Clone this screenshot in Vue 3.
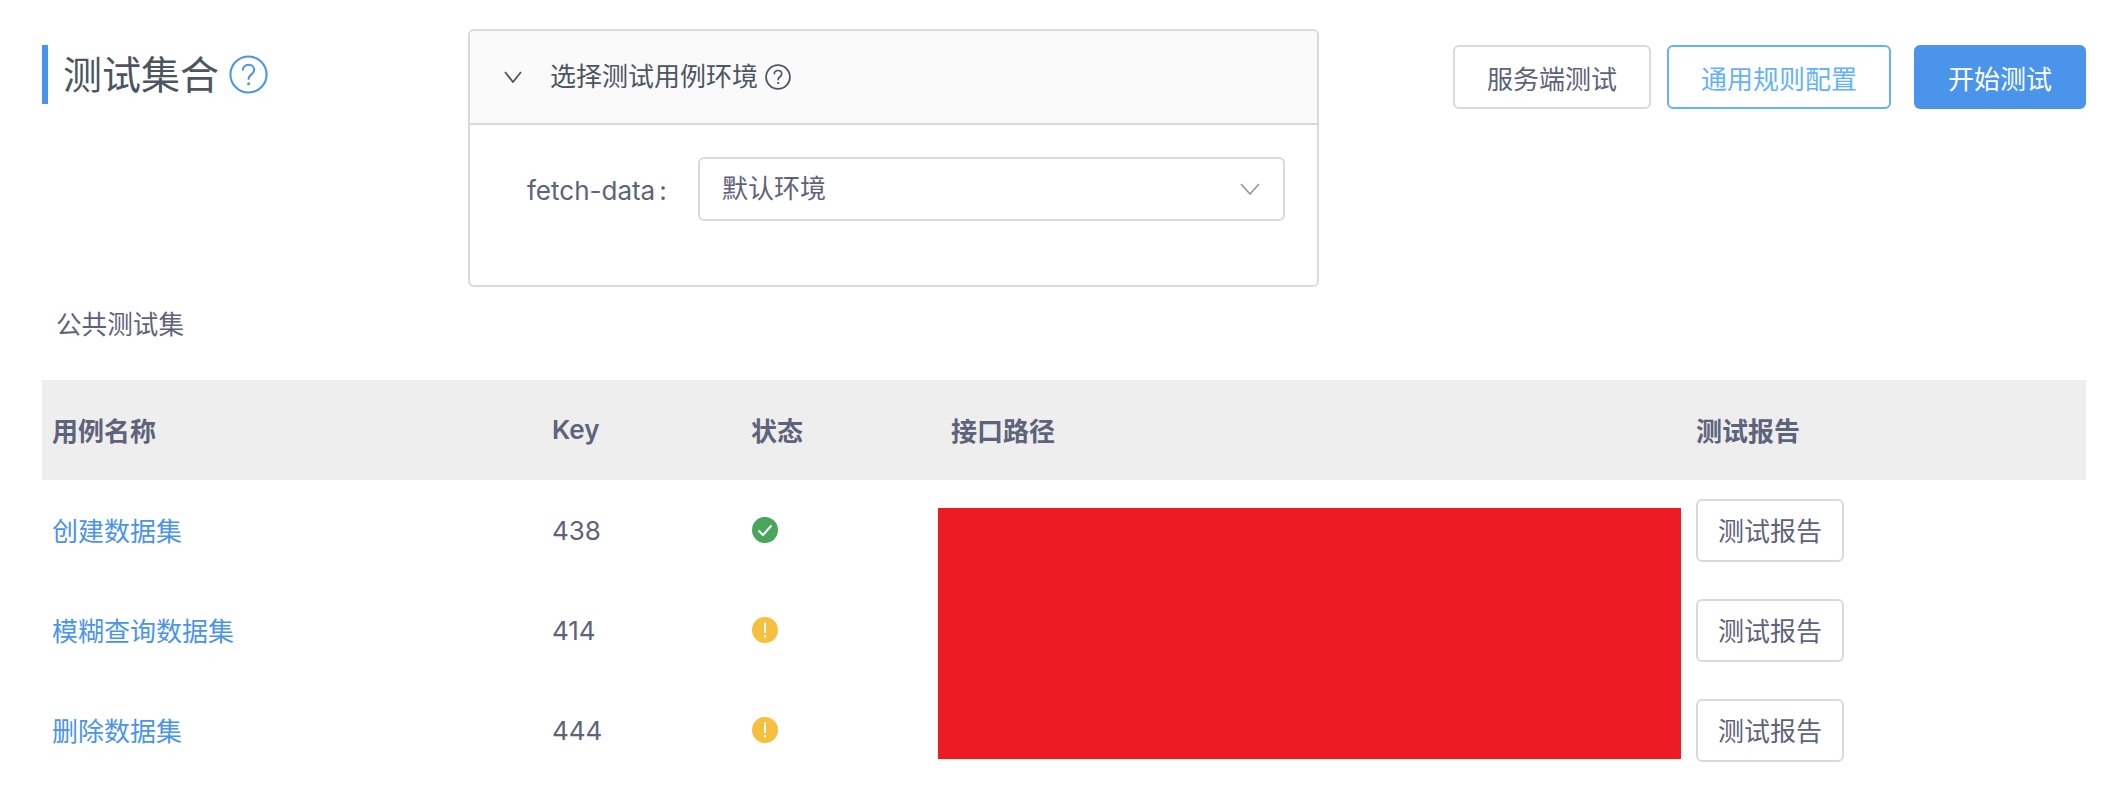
<script setup>
const rows = [
  { name: '创建数据集', key: '438', ok: true },
  { name: '模糊查询数据集', key: '414', ok: false },
  { name: '删除数据集', key: '444', ok: false },
]
</script>

<template>
  <div class="page">
    <div class="top">
      <div class="title-block">
        <h1 class="title">测试集合</h1>
        <svg class="help-big" viewBox="0 0 38 38" fill="none">
          <circle cx="19" cy="19" r="17.6" stroke="#4a94eb" stroke-width="2" />
          <path d="M13.5 15c0-3.4 2.4-5.5 5.6-5.5s5.400 2 5.400 4.900c0 2.300-1.200 3.400-3 4.700-1.600 1.200-2.400 2.200-2.400 4.300v.6" stroke="#4a94eb" stroke-width="2" />
          <circle cx="19.100" cy="28" r="1.500" fill="#4a94eb" />
        </svg>
      </div>

      <section class="panel">
        <header class="panel-head">
          <svg class="chev-dark" viewBox="0 0 18 12" fill="none">
            <path d="M1 1l8 10 8-10" stroke="#4d5563" stroke-width="1.800" />
          </svg>
          <span class="panel-title">选择测试用例环境</span>
          <svg class="help-small" viewBox="0 0 26 26" fill="none">
            <circle cx="13" cy="13" r="11.900" stroke="#4d5563" stroke-width="1.800" />
            <path d="M9.300 10.200c0-2.300 1.600-3.700 3.800-3.700 2.100 0 3.600 1.300 3.600 3.300 0 1.600-.8 2.300-2 3.200-1.100.8-1.600 1.500-1.600 2.900v.4" stroke="#4d5563" stroke-width="1.700" />
            <circle cx="13.100" cy="19" r="1.100" fill="#4d5563" />
          </svg>
        </header>
        <div class="panel-body">
          <label class="field-label">fetch-data<span class="colon">:</span></label>
          <div class="select">
            <span class="select-value">默认环境</span>
            <svg class="chev-light" viewBox="0 0 20 12" fill="none">
              <path d="M1 1l9 10 9-10" stroke="#9096a8" stroke-width="1.600" />
            </svg>
          </div>
        </div>
      </section>

      <div class="actions">
        <button class="btn">服务端测试</button>
        <button class="btn btn-outline">通用规则配置</button>
        <button class="btn btn-primary">开始测试</button>
      </div>
    </div>

    <div class="section-label">公共测试集</div>

    <div class="table">
      <div class="th">用例名称</div>
      <div class="th">Key</div>
      <div class="th">状态</div>
      <div class="th th-path">接口路径</div>
      <div class="th th-report">测试报告</div>

      <div class="redacted"></div>

      <template v-for="row in rows" :key="row.key">
        <div class="td td-name"><a class="link">{{ row.name }}</a></div>
        <div class="td">{{ row.key }}</div>
        <div class="td">
          <svg v-if="row.ok" class="status" viewBox="0 0 26 26">
            <circle cx="13" cy="13" r="13" fill="#4aa55c" />
            <path d="M6.500 13.500l4.500 4.500 8.500-9.500" fill="none" stroke="#fff" stroke-width="2" />
          </svg>
          <svg v-else class="status" viewBox="0 0 26 26">
            <circle cx="13" cy="13" r="13" fill="#f5c040" />
            <rect x="12" y="5.500" width="2" height="10.500" fill="#fff" />
            <rect x="12" y="18" width="2" height="2.400" fill="#fff" />
          </svg>
        </div>
        <div class="td td-report"><button class="btn btn-report">测试报告</button></div>
      </template>
    </div>
  </div>
</template>

<style>
html, body {
  margin: 0;
  background: #fff;
}
</style>

<style scoped>
.page {
  width: 2122px;
  height: 790px;
  overflow: hidden;
  box-sizing: border-box;
  font-family: Inter, "Noto Sans CJK SC", sans-serif;
  font-size: 26px;
  color: #5d637a;
}

.top {
  display: flex;
  align-items: flex-start;
  padding: 29px 36px 0 42px;
}

.title-block {
  width: 426px;
  flex: none;
  box-sizing: border-box;
  margin-top: 16px;
  height: 59px;
  padding-left: 15px;
  border-left: 6px solid #4a94eb;
  display: flex;
  align-items: center;
  gap: 10px;
}

.title {
  margin: 0;
  font-size: 39px;
  font-weight: 400;
  line-height: 59px;
  color: #4c5561;
}

.help-big {
  width: 39px;
  height: 39px;
  flex: none;
}

.panel {
  width: 851px;
  height: 258px;
  flex: none;
  box-sizing: border-box;
  border: 2px solid #dadada;
  border-radius: 6px;
  overflow: hidden;
}

.panel-head {
  height: 94px;
  box-sizing: border-box;
  display: flex;
  align-items: center;
  padding: 0 0 0 34px;
  background: #fafafa;
  border-bottom: 2px solid #dadada;
  color: #4c5561;
}

.chev-dark {
  width: 18px;
  height: 12px;
  margin-right: 28px;
  flex: none;
}

.panel-title {
  line-height: 36px;
}

.help-small {
  width: 26px;
  height: 26px;
  margin-left: 7px;
  flex: none;
}

.panel-body {
  display: flex;
  align-items: flex-start;
  padding: 32px 32px 0 57px;
}

.field-label {
  width: 171px;
  flex: none;
  line-height: 67px;
}

.colon {
  margin-left: 4px;
}

.select {
  flex: 1;
  height: 64px;
  box-sizing: border-box;
  border: 2px solid #dadada;
  border-radius: 6px;
  display: flex;
  align-items: center;
  justify-content: space-between;
  padding: 0 23px 0 22px;
}

.select-value {
  line-height: 36px;
}

.chev-light {
  width: 20px;
  height: 12px;
  flex: none;
}

.actions {
  margin: 16px 0 0 auto;
  display: flex;
  gap: 16px;
}

.btn {
  height: 64px;
  box-sizing: border-box;
  padding: 0 32px;
  background: #fff;
  border: 2px solid #dadada;
  border-radius: 6px;
  font: inherit;
  color: #5d637a;
}

.btn-outline {
  color: #66b1ff;
  border-color: #66b1ff;
}

.btn-primary {
  margin-left: 7px;
  color: #fff;
  background: #4a94eb;
  border-color: #4a94eb;
}

.section-label {
  margin: 18px 0 35px 56px;
  line-height: 40px;
  font-size: 25.600px;
}

.table {
  margin: 0 36px 0 42px;
  display: grid;
  grid-template-columns: 500px 199px 197px 758px 390px;
  grid-template-rows: repeat(4, 100px);
}

.th {
  background: #eee;
  display: flex;
  align-items: center;
  padding-left: 10px;
  padding-bottom: 2px;
  box-sizing: border-box;
  font-weight: 600;
  color: #5d637a;
}

.th-path {
  padding-left: 13px;
}

.th-report {
  padding-left: 0;
}

.redacted {
  grid-column: 4;
  grid-row: 2 / span 3;
  justify-self: start;
  width: 743px;
  height: 251px;
  margin-top: 28px;
  background: #ed1c24;
}

.td {
  display: flex;
  align-items: center;
  padding-left: 10px;
  box-sizing: border-box;
}

.td-name {
  grid-column: 1;
  padding-bottom: 2px;
}

.link {
  color: #4a94eb;
}

.status {
  width: 26px;
  height: 26px;
  margin-left: 1px;
}

.td-report {
  grid-column: 5;
  padding-left: 0;
}

.btn-report {
  width: 148px;
  height: 63px;
  padding: 0 0 2px;
}
</style>
